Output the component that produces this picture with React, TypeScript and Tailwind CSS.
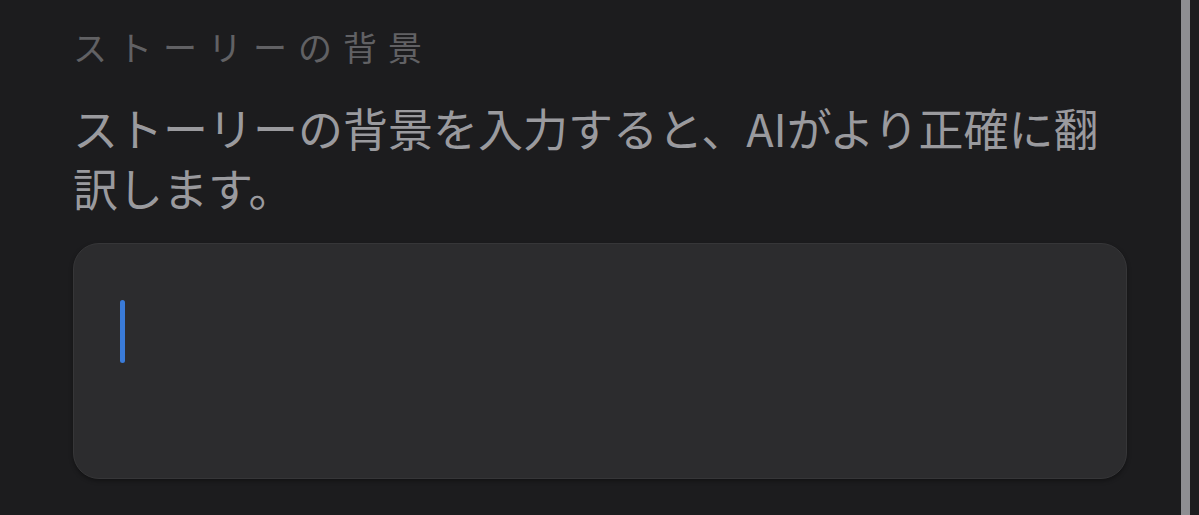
export default function App() {
  return (
    <div
      className="flex h-[515px] w-full overflow-hidden bg-[#1c1c1e]"
      style={{ fontFamily: '"Noto Sans CJK JP", "Noto Sans", sans-serif' }}
    >
      <div className="flex-1 pl-[73px] pr-[54px]">
        {/* Section header */}
        <h2 className="pt-[24px] text-[34px] leading-[46px] tracking-[11px] text-[#616164]">
          ストーリーの背景
        </h2>

        {/* Description */}
        <p className="mt-[28px] text-[45px] leading-[60px] text-[#9a9a9e]">
          ストーリーの背景を入力すると、AIがより正確に翻訳します。
        </p>

        {/* Input area */}
        <div className="mt-[25px] h-[236px] rounded-[26px] border border-[#363638] bg-[#2c2c2e] pl-[46px] pt-[56px] shadow-[0_2px_4px_rgba(0,0,0,0.35)]">
          <div className="h-[63px] w-[5px] rounded-full bg-[#3a7bd8]" />
        </div>
      </div>

      {/* Scroll indicator */}
      <div className="w-[9px] bg-[#8e8e92]" />
      <div className="w-[9px]" />
    </div>
  );
}
